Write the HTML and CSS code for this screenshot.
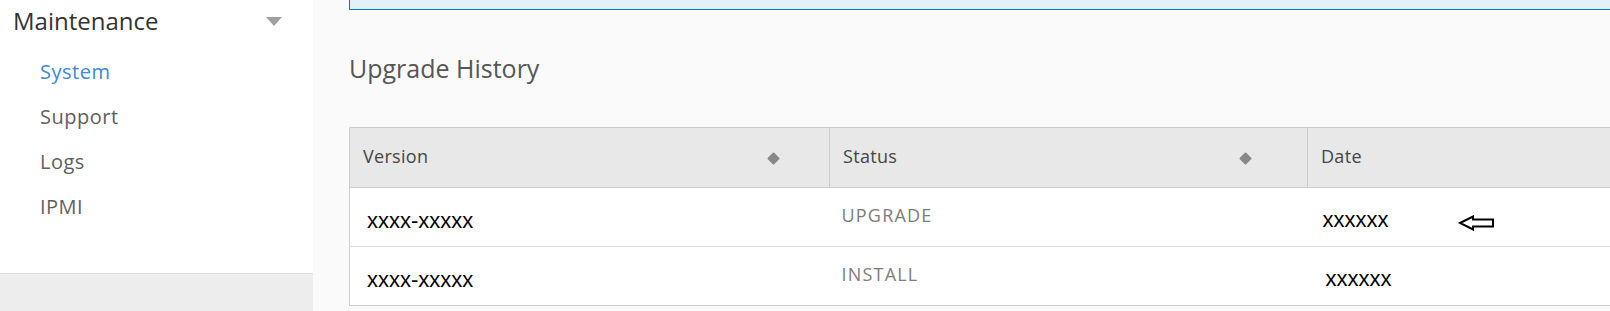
FILE: index.html
```html
<!DOCTYPE html>
<html lang="en">
<head>
  <meta charset="UTF-8" />
  <meta name="viewport" content="width=device-width, initial-scale=1.0"/>
  <title>Maintenance - System</title>
  <link rel="stylesheet" href="styles.css">
</head>
<body>

  <nav class="sidebar">
    <div class="nav">
      <div class="nav-title">
        <span>Maintenance</span>
        <span class="caret"></span>
      </div>
      <div class="nav-links">
        <a class="nav-link active">System</a>
        <a class="nav-link">Support</a>
        <a class="nav-link">Logs</a>
        <a class="nav-link">IPMI</a>
      </div>
    </div>
    <div class="sidebar-foot"></div>
  </nav>

  <main class="content">
    <div class="alert"></div>

    <h2 class="section-title">Upgrade History</h2>

    <table class="history">
      <thead>
        <tr>
          <th class="col-version"><div class="th-inner">Version <span class="sort"></span></div></th>
          <th class="col-status"><div class="th-inner">Status <span class="sort"></span></div></th>
          <th class="col-date"><div class="th-inner">Date</div></th>
        </tr>
      </thead>
      <tbody>
        <tr>
          <td class="cell-version">xxxx-xxxxx</td>
          <td class="cell-status">UPGRADE</td>
          <td class="cell-date">
            <span class="date-text">xxxxxx</span>
            <!-- marker arrow -->
            <svg class="arrow" width="37" height="16" viewBox="0 0 37 16">
              <path d="M2 8 L15 1.5 L15 4.5 L35 4.5 L35 11.5 L15 11.5 L15 14.5 Z" fill="none" stroke="#000" stroke-width="2" stroke-linejoin="miter"/>
            </svg>
          </td>
        </tr>
        <tr>
          <td class="cell-version">xxxx-xxxxx</td>
          <td class="cell-status">INSTALL</td>
          <td class="cell-date second"><span class="date-text">xxxxxx</span></td>
        </tr>
      </tbody>
    </table>
  </main>

</body>
</html>
```

FILE: styles.css
```css
* {
  box-sizing: border-box;
  margin: 0;
  padding: 0;
}

body {
  background-color: #fafafa;
  font-family: "Open Sans", sans-serif;
  display: flex;
  height: 311px;
  overflow: hidden;
}

.sidebar {
  width: 313px;
  flex-shrink: 0;
  display: flex;
  flex-direction: column;
  background-color: #fff;
}

.nav {
  height: 273px;
}

.nav-title {
  display: flex;
  justify-content: space-between;
  align-items: center;
  padding: 0 31px 0 13px;
  height: 41px;
  font-size: 24px;
  color: #333;
}

.caret {
  width: 0;
  height: 0;
  border-left: 8px solid transparent;
  border-right: 8px solid transparent;
  border-top: 9px solid #a0a0a0;
  margin-top: 2px;
}

.nav-links {
  padding-top: 8px;
}

.nav-link {
  display: block;
  padding-left: 40px;
  font-size: 20px;
  letter-spacing: 0.5px;
  line-height: 45px;
  color: #5f5f5f;
  cursor: pointer;
}

.nav-link.active {
  color: #3a8ada;
}

.sidebar-foot {
  flex: 1;
  background-color: #ededed;
  border-top: 1px solid #dcdcdc;
}

.content {
  flex: 1;
  min-width: 0;
  padding-left: 36px;
}

.alert {
  height: 10px;
  margin-right: -20px;
  background-color: #e1f1f6;
  border-left: 1px solid #0f74bc;
  border-bottom: 1px solid #0f74bc;
}

.section-title {
  font-size: 25px;
  font-weight: 400;
  color: #565656;
  margin-top: 42px;
  line-height: 32px;
}

.history {
  margin-top: 43px;
  width: calc(100% + 20px);
  border-collapse: collapse;
  background-color: #fff;
  border: 1px solid #ccc;
  table-layout: fixed;
}

.history th {
  background-color: #e8e8e8;
  height: 60px;
  font-weight: 400;
  font-size: 18px;
  letter-spacing: 0.3px;
  color: #454545;
  text-align: left;
  border-bottom: 1px solid #ccc;
  border-left: 1px solid #ccc;
}

.history th:first-child {
  border-left: none;
}

.col-version { width: 480px; }
.col-status { width: 478px; }

.th-inner {
  display: flex;
  justify-content: space-between;
  align-items: center;
  padding: 0 51px 4px 13px;
}

.col-status .th-inner {
  padding-right: 57px;
}

.sort {
  width: 9px;
  height: 9px;
  background-color: #888;
  transform: rotate(45deg);
  border-radius: 1px;
  margin-top: 5px;
}

.history td {
  height: 59px;
  border-bottom: 1px solid #ddd;
  vertical-align: middle;
}

.history tr:last-child td {
  border-bottom: none;
}

.cell-version {
  font-family: "Liberation Sans", Arial, sans-serif;
  font-size: 22px;
  color: #000;
  padding: 8px 0 0 17px;
}

.cell-status {
  font-size: 18px;
  letter-spacing: 1.2px;
  color: #7d7d7d;
  padding: 0 0 5px 12px;
}

.cell-date {
  font-family: "Liberation Sans", Arial, sans-serif;
  font-size: 22px;
  color: #000;
  padding: 6px 0 0 15px;
}

.cell-date.second {
  padding-left: 18px;
}

.date-text {
  display: inline-block;
  width: 129px;
}

.arrow {
  vertical-align: middle;
  position: relative;
  top: 2px;
}
```
